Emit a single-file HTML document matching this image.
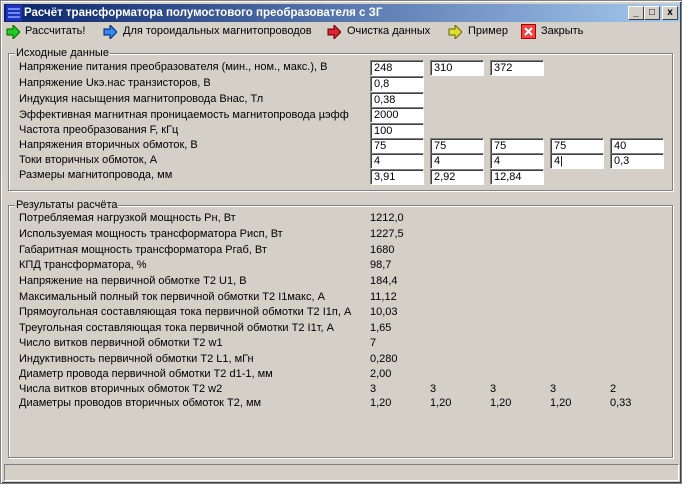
<!DOCTYPE html><html><head><meta charset="utf-8"><style>
*{margin:0;padding:0;box-sizing:border-box}
body{width:682px;height:484px;background:#d4d0c8;font:11px "Liberation Sans","Noto Sans CJK SC",sans-serif;color:#000;position:relative;overflow:hidden;border:1px solid #808080;box-shadow:inset 1px 1px #fff,inset -1px -1px #404040}
.a{position:absolute;white-space:nowrap;line-height:14px}
#title{position:absolute;left:3px;top:3px;width:676px;height:18px;background:linear-gradient(90deg,#0a246a,#a6caf0);color:#fff;font-weight:bold;font-size:11.5px;line-height:18px;padding-left:20px}
.wb{position:absolute;top:2px;width:16px;height:14px;background:#d4d0c8;border:1px solid;border-color:#fff #404040 #404040 #fff;color:#000;font-size:10px;line-height:12px;text-align:center;font-weight:bold}
.in{position:absolute;width:54px;height:16px;background:#fff;border:1px solid;border-color:#808080 #fff #fff #808080;box-shadow:inset 1px 1px #404040;padding-left:3px;line-height:14px}
.gb{position:absolute;border:1px solid #808080;box-shadow:1px 1px #fff,inset 1px 1px #fff}
.gt{position:absolute;background:#d4d0c8;padding:0 1px;line-height:12px}
.arr{position:absolute;top:24px}
</style></head><body>
<div id="title"><svg style="position:absolute;left:2px;top:1px" width="16" height="16"><rect width="16" height="16" fill="#2030c0"/><path d="M2 4h12M2 8h12M2 12h12" stroke="#8af" stroke-width="1.5"/></svg>Расчёт трансформатора полумостового преобразователя с ЗГ
<div class="wb" style="left:624px">_</div><div class="wb" style="left:640px">□</div><div class="wb" style="left:658px">x</div></div>
<svg class="arr" style="left:5px" width="14" height="14"><path d="M1 4h6V0l7 7-7 7v-4H1z" fill="#2c2" stroke="#060"/></svg><div class="a" style="left:24px;top:23px">Рассчитать!</div>
<svg class="arr" style="left:102px" width="14" height="14"><path d="M1 4h6V0l7 7-7 7v-4H1z" fill="#38e" stroke="#026"/></svg><div class="a" style="left:122px;top:23px">Для тороидальных магнитопроводов</div>
<svg class="arr" style="left:326px" width="14" height="14"><path d="M1 4h6V0l7 7-7 7v-4H1z" fill="#d23" stroke="#600"/></svg><div class="a" style="left:346px;top:23px">Очистка данных</div>
<svg class="arr" style="left:447px" width="14" height="14"><path d="M1 4h6V0l7 7-7 7v-4H1z" fill="#dd3" stroke="#660"/></svg><div class="a" style="left:467px;top:23px">Пример</div>
<svg class="arr" style="left:520px;top:23px" width="15" height="15"><rect x=".5" y=".5" width="14" height="14" fill="#e44" stroke="#a00"/><path d="M4 4l7 7M11 4l-7 7" stroke="#fff" stroke-width="2"/></svg><div class="a" style="left:540px;top:23px">Закрыть</div>
<div class="gb" style="left:7px;top:52px;width:665px;height:138px"></div><div class="gt a" style="left:14px;top:46px">Исходные данные</div>
<div class="a" style="left:18px;top:59px">Напряжение питания преобразователя (мин., ном., макс.), В</div>
<div class="a" style="left:18px;top:75px">Напряжение Uкэ.нас транзисторов, В</div>
<div class="a" style="left:18px;top:91px">Индукция насыщения магнитопровода Внас, Тл</div>
<div class="a" style="left:18px;top:107px">Эффективная магнитная проницаемость магнитопровода µэфф</div>
<div class="a" style="left:18px;top:122px">Частота преобразования F, кГц</div>
<div class="a" style="left:18px;top:137px">Напряжения вторичных обмоток, В</div>
<div class="a" style="left:18px;top:152px">Токи вторичных обмоток, А</div>
<div class="a" style="left:18px;top:167px">Размеры магнитопровода, мм</div>
<div class="in" style="left:369px;top:59px">248</div><div class="in" style="left:429px;top:59px">310</div><div class="in" style="left:489px;top:59px">372</div>
<div class="in" style="left:369px;top:75px">0,8</div>
<div class="in" style="left:369px;top:91px">0,38</div>
<div class="in" style="left:369px;top:106px">2000</div>
<div class="in" style="left:369px;top:122px">100</div>
<div class="in" style="left:369px;top:137px">75</div><div class="in" style="left:429px;top:137px">75</div><div class="in" style="left:489px;top:137px">75</div><div class="in" style="left:549px;top:137px">75</div><div class="in" style="left:609px;top:137px">40</div>
<div class="in" style="left:369px;top:152px">4</div><div class="in" style="left:429px;top:152px">4</div><div class="in" style="left:489px;top:152px">4</div><div class="in" style="left:549px;top:152px">4|</div><div class="in" style="left:609px;top:152px">0,3</div>
<div class="in" style="left:369px;top:168px">3,91</div><div class="in" style="left:429px;top:168px">2,92</div><div class="in" style="left:489px;top:168px">12,84</div>
<div class="gb" style="left:7px;top:204px;width:665px;height:253px"></div><div class="gt a" style="left:14px;top:198px">Результаты расчёта</div>
<div class="a" style="left:18px;top:210px">Потребляемая нагрузкой мощность Рн, Вт</div><div class="a" style="left:369px;top:210px">1212,0</div>
<div class="a" style="left:18px;top:226px">Используемая мощность трансформатора Рисп, Вт</div><div class="a" style="left:369px;top:226px">1227,5</div>
<div class="a" style="left:18px;top:242px">Габаритная мощность трансформатора Ргаб, Вт</div><div class="a" style="left:369px;top:242px">1680</div>
<div class="a" style="left:18px;top:257px">КПД трансформатора, %</div><div class="a" style="left:369px;top:257px">98,7</div>
<div class="a" style="left:18px;top:273px">Напряжение на первичной обмотке Т2 U1, В</div><div class="a" style="left:369px;top:273px">184,4</div>
<div class="a" style="left:18px;top:289px">Максимальный полный ток первичной обмотки Т2 I1макс, А</div><div class="a" style="left:369px;top:289px">11,12</div>
<div class="a" style="left:18px;top:304px">Прямоугольная составляющая тока первичной обмотки Т2 I1п, А</div><div class="a" style="left:369px;top:304px">10,03</div>
<div class="a" style="left:18px;top:320px">Треугольная составляющая тока первичной обмотки Т2 I1т, А</div><div class="a" style="left:369px;top:320px">1,65</div>
<div class="a" style="left:18px;top:335px">Число витков первичной обмотки Т2 w1</div><div class="a" style="left:369px;top:335px">7</div>
<div class="a" style="left:18px;top:351px">Индуктивность первичной обмотки Т2 L1, мГн</div><div class="a" style="left:369px;top:351px">0,280</div>
<div class="a" style="left:18px;top:366px">Диаметр провода первичной обмотки Т2 d1-1, мм</div><div class="a" style="left:369px;top:366px">2,00</div>
<div class="a" style="left:18px;top:381px">Числа витков вторичных обмоток Т2 w2</div><div class="a" style="left:369px;top:381px">3</div><div class="a" style="left:429px;top:381px">3</div><div class="a" style="left:489px;top:381px">3</div><div class="a" style="left:549px;top:381px">3</div><div class="a" style="left:609px;top:381px">2</div>
<div class="a" style="left:18px;top:395px">Диаметры проводов вторичных обмоток Т2, мм</div><div class="a" style="left:369px;top:395px">1,20</div><div class="a" style="left:429px;top:395px">1,20</div><div class="a" style="left:489px;top:395px">1,20</div><div class="a" style="left:549px;top:395px">1,20</div><div class="a" style="left:609px;top:395px">0,33</div>
<div style="position:absolute;left:3px;top:463px;width:675px;height:17px;border:1px solid;border-color:#808080 #fff #fff #808080"></div>
</body></html>
